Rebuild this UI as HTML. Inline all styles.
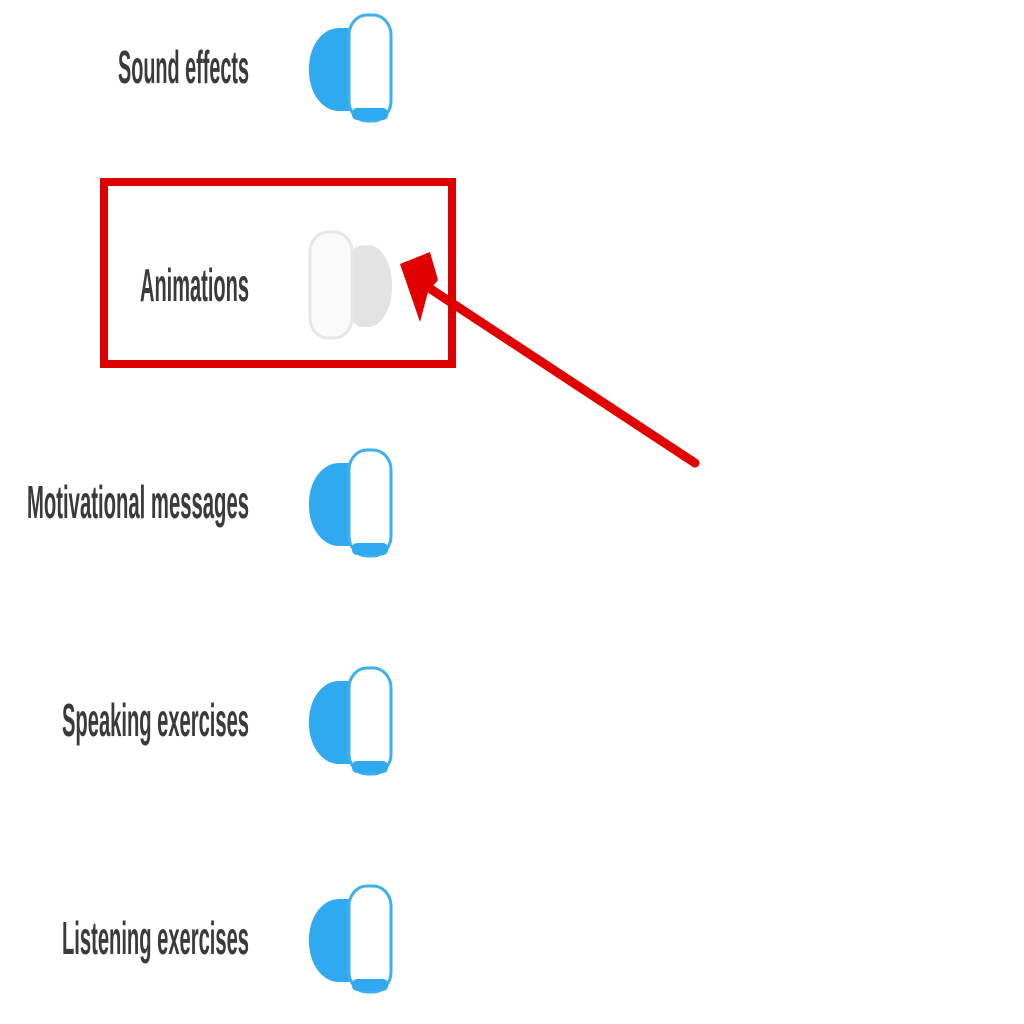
<!DOCTYPE html>
<html><head><style>html,body{margin:0;padding:0;background:#fff;width:1024px;height:1024px;overflow:hidden}</style></head>
<body>
<svg width="1024" height="1024" viewBox="0 0 1024 1024" xmlns="http://www.w3.org/2000/svg">
<g font-family="Liberation Sans, sans-serif" font-size="46" font-weight="bold" fill="#3a3a3a" text-anchor="start">
<text x="118" y="83" textLength="131" lengthAdjust="spacingAndGlyphs">Sound effects</text>
<text x="140" y="301" textLength="109" lengthAdjust="spacingAndGlyphs">Animations</text>
<text x="27" y="518" textLength="222" lengthAdjust="spacingAndGlyphs">Motivational messages</text>
<text x="62" y="736" textLength="187" lengthAdjust="spacingAndGlyphs">Speaking exercises</text>
<text x="62" y="954" textLength="187" lengthAdjust="spacingAndGlyphs">Listening exercises</text>
</g>
<defs>
<g id="on">
<rect x="309" y="28" width="76" height="83" rx="30" ry="40" fill="#2fa9ef"/>
<rect x="349" y="15" width="42" height="106" rx="18" ry="20" fill="#fff" stroke="#3cb0f0" stroke-width="3"/>
<rect x="352" y="108" width="36" height="12" rx="5" fill="#2fa9ef"/>
</g>
</defs>
<use href="#on"/>
<use href="#on" y="435"/>
<use href="#on" y="653"/>
<use href="#on" y="871"/>
<rect x="340" y="245" width="52" height="82" rx="24" ry="40" fill="#e3e3e3"/>
<rect x="310" y="232" width="42" height="106" rx="18" ry="20" fill="#fafafa" stroke="#e6e6e6" stroke-width="3"/>
<rect x="104" y="182" width="348" height="182" fill="none" stroke="#dd0000" stroke-width="8"/>
<line x1="695" y1="463" x2="420" y2="282" stroke="#e00000" stroke-width="9" stroke-linecap="round"/>
<polygon points="400,264 430,252 438,280 428,292 420,322" fill="#e00000"/>
</svg>
</body></html>
